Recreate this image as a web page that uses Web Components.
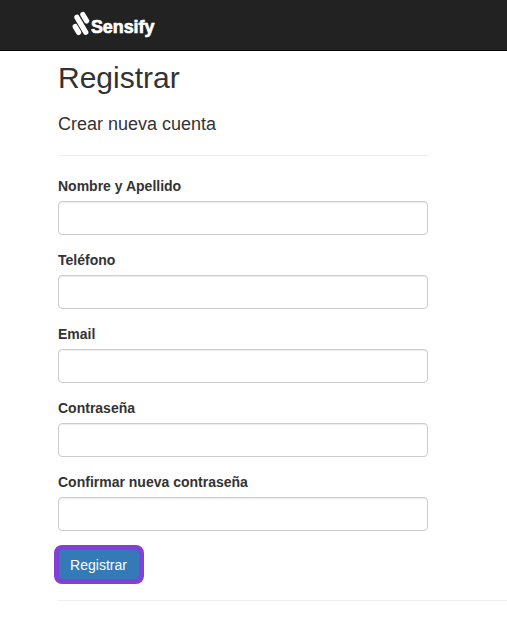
<!DOCTYPE html>
<html lang="es">
<head>
<meta charset="utf-8">
<title>Registrar - Sensify</title>
<style>
  body {
    margin: 0;
    background: #fff;
    color: #333;
    font-family: "Liberation Sans", Arial, sans-serif;
    font-size: 14px;
    line-height: 20px;
    overflow: hidden;
  }
</style>
</head>
<body>
<register-page></register-page>

<script>
(function () {
  customElements.define('nav-bar', class extends HTMLElement {
    constructor() {
      super();
      this.shadow = this.attachShadow({ mode: 'open' });
      this.shadow.innerHTML = `
        <style>
          :host {
            display: flex;
            align-items: center;
            box-sizing: border-box;
            height: 51px;
            padding-left: 72px;
            background: #222;
            border-bottom: 1px solid #080808;
          }
          svg {
            display: block;
            flex: none;
            overflow: visible;
          }
          text {
            font: bold 19px "Liberation Sans", Arial, sans-serif;
            fill: #fff;
            stroke: #fff;
            stroke-width: .7;
          }
        </style>
        <svg width="110" height="50" viewBox="0 0 110 50">
          <g fill="none" stroke="#fff" stroke-width="5.2" stroke-linecap="round">
            <path d="M10.8 14.5L14.6 20.9"/>
            <path d="M4.9 17.3L13.8 32.3"/>
            <path d="M3.2 26.6L6.6 32.4"/>
          </g>
          <text x="18.9" y="33" textLength="63.6" lengthAdjust="spacingAndGlyphs">Sensify</text>
        </svg>`;
    }
  });

  customElements.define('form-field', class extends HTMLElement {
    constructor() {
      super();
      this.shadow = this.attachShadow({ mode: 'open' });
      this.shadow.innerHTML = `
        <style>
          :host {
            display: block;
            margin-bottom: 15px;
          }
          label {
            display: block;
            margin-bottom: 5px;
            font-weight: bold;
          }
          input {
            display: block;
            box-sizing: border-box;
            width: 100%;
            height: 34px;
            padding: 6px 12px;
            font: inherit;
            color: #555;
            background: #fff;
            border: 1px solid #ccc;
            border-radius: 4px;
            box-shadow: inset 0 1px 1px rgba(0,0,0,.075);
          }
        </style>
        <label for="control"><slot></slot></label>
        <input id="control">`;
    }

    connectedCallback() {
      this.shadow.querySelector('input').type = this.getAttribute('type') || 'text';
    }
  });

  customElements.define('submit-button', class extends HTMLElement {
    constructor() {
      super();
      this.shadow = this.attachShadow({ mode: 'open' });
      this.shadow.innerHTML = `
        <style>
          :host {
            display: block;
            margin: -1px 0 0 -4px;
          }
          button {
            display: block;
            box-sizing: border-box;
            width: 90px;
            height: 39px;
            padding: 0 1px 0 0;
            font: inherit;
            color: #fff;
            background: #337ab7;
            border: 5px solid #843fd6;
            border-radius: 8px;
          }
        </style>
        <button type="button"><slot></slot></button>`;
    }
  });

  customElements.define('register-page', class extends HTMLElement {
    constructor() {
      super();
      this.shadow = this.attachShadow({ mode: 'open' });
      this.shadow.innerHTML = `
        <style>
          :host {
            display: block;
          }
          main {
            padding: 10px 0 0 58px;
          }
          form {
            width: 370px;
          }
          h2, h4 {
            margin: 0;
            font-weight: normal;
          }
          h2 {
            font-size: 30px;
            line-height: 33px;
          }
          h4 {
            margin-top: 20px;
            font-size: 18px;
            line-height: 20px;
          }
          hr {
            margin: 21px 0 20px;
            border: 0;
            border-top: 1px solid #eee;
          }
          footer hr {
            margin: 16px 0 0;
          }
        </style>
        <nav-bar></nav-bar>
        <main>
          <h2>Registrar</h2>
          <form>
            <h4>Crear nueva cuenta</h4>
            <hr>
            <form-field>Nombre y Apellido</form-field>
            <form-field type="tel">Teléfono</form-field>
            <form-field type="email">Email</form-field>
            <form-field type="password">Contraseña</form-field>
            <form-field type="password">Confirmar nueva contraseña</form-field>
            <submit-button>Registrar</submit-button>
          </form>
          <footer><hr></footer>
        </main>`;
    }
  });
})();
</script>
</body>
</html>
